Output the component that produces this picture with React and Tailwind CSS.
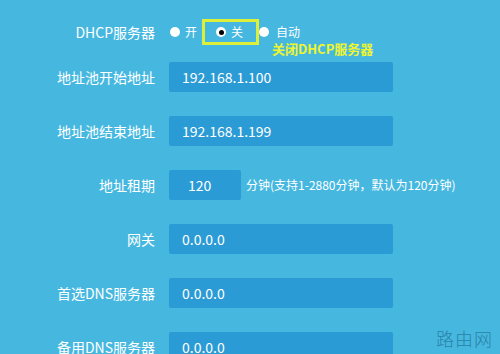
import React from "react";

const font = { fontFamily: '"Noto Sans CJK SC", "Noto Sans", sans-serif' };

const Radio = ({ checked }) => (
  <span className="flex h-[10px] w-[10px] items-center justify-center rounded-full bg-white">
    {checked && <span className="h-[5px] w-[5px] rounded-full bg-black" />}
  </span>
);

const Row = ({ label, value, narrow, note }) => (
  <div className="flex h-[30px] items-center">
    <div className="w-[155px] text-right text-[14px] text-white">{label}</div>
    <div
      className={`ml-[14px] flex h-[30px] items-center rounded-[2px] bg-[#2b9bd6] text-[14px] text-white ${
        narrow ? "w-[72px] pl-[19px]" : "w-[224px] pl-[13px]"
      }`}
    >
      {value}
    </div>
    {note && <div className="ml-[5px] whitespace-nowrap text-[12px] text-white">{note}</div>}
  </div>
);

const App = () => {
  return (
    <div className="relative h-[354px] w-[500px] overflow-hidden bg-[#46b8e0]" style={font}>
      <div className="mt-[19px] flex h-[26px] items-center">
        <div className="w-[155px] text-right text-[14px] text-white">DHCP服务器</div>
        <div className="relative ml-[15px] flex items-center text-[12px] text-white">
          <Radio />
          <span className="ml-[5px]">开</span>
          <div className="ml-[5px] flex h-[26px] w-[57px] items-center border-[3px] border-[#dcef3a] pl-[11px]">
            <Radio checked />
            <span className="ml-[5px]">关</span>
          </div>
          <Radio />
          <span className="ml-[7px]">自动</span>
          <div className="absolute left-[102px] top-[20px] whitespace-nowrap text-[13px] font-bold text-[#eef52e]">
            关闭DHCP服务器
          </div>
        </div>
      </div>
      <div className="mt-[17px] flex flex-col gap-[24px]">
        <Row label="地址池开始地址" value="192.168.1.100" />
        <Row label="地址池结束地址" value="192.168.1.199" />
        <Row label="地址租期" value="120" narrow note="分钟(支持1-2880分钟，默认为120分钟)" />
        <Row label="网关" value="0.0.0.0" />
        <Row label="首选DNS服务器" value="0.0.0.0" />
        <Row label="备用DNS服务器" value="0.0.0.0" />
      </div>
      <div className="absolute bottom-[2px] right-[7px] text-[18px] font-light tracking-[1px] text-[#2a82a8]">
        路由网
      </div>
    </div>
  );
};

export default App;
